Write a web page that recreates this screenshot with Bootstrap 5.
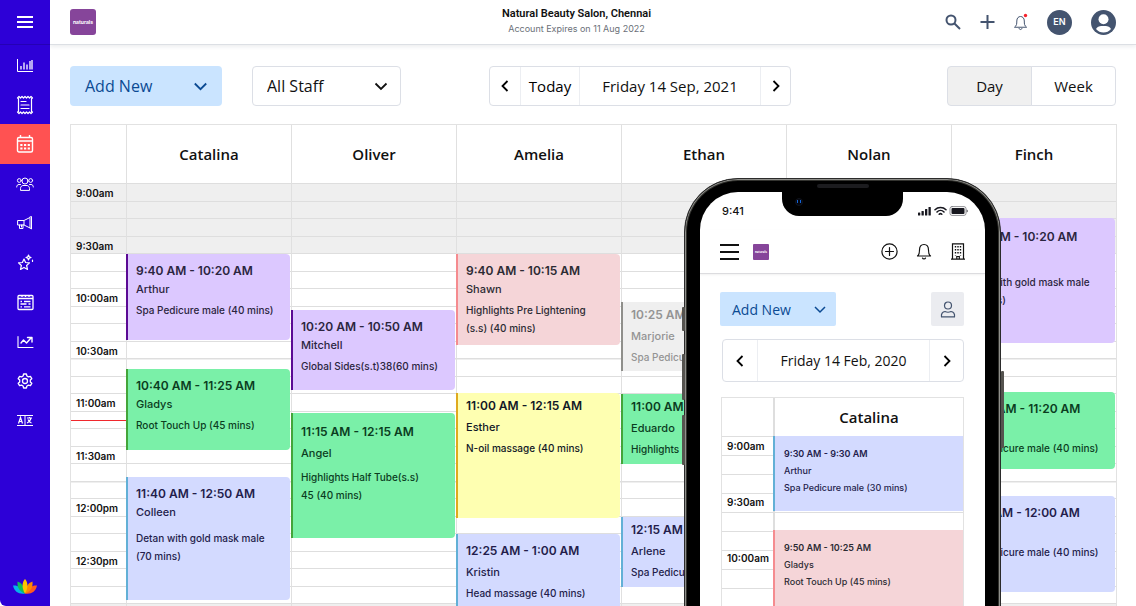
<!DOCTYPE html>
<html lang="en">
<head>
<meta charset="utf-8">
<meta name="viewport" content="width=device-width, initial-scale=1">
<title>Appointments</title>
<link href="https://cdn.jsdelivr.net/npm/bootstrap@5.3.0/dist/css/bootstrap.min.css" rel="stylesheet">
<style>
  body { font-family: Inter, "Liberation Sans", sans-serif; color: #111; background: #fff; overflow: hidden; }
  button, select { font: inherit; }
  svg { display: block; flex: none; fill: none; stroke: currentColor; stroke-linecap: round; stroke-linejoin: round; }
  svg.flat { stroke-linecap: butt; stroke-linejoin: miter; }
  svg.solid { stroke: none; }
  .humanist { font-family: "Open Sans", "Noto Sans", sans-serif; }

  /* side navigation */
  .rail { flex: 0 0 50px; background: #2d00d7; border-bottom-left-radius: 6px; }
  .rail a, .rail button { color: #fff; display: flex; align-items: center; justify-content: center; height: 39px; }
  .rail li:nth-child(odd) a { height: 40px; }
  .rail .menu-btn { height: 45px; border: 0; border-bottom: 1px solid #2500b4; background: none; }
  .rail a.active { background: #ff5252; }
  .rail .home { height: 39px; }

  /* top bar */
  .topbar { height: 45px; padding: 0 20px; border-bottom: 1px solid #dcdfe4; box-shadow: 0 2px 4px rgba(30, 40, 60, .08); }
  .brand { background: #86459a; color: #fff; border-radius: 3px; display: grid; place-items: center; width: 26px; height: 26px; font-size: 5px; line-height: 6px; font-weight: 700; text-decoration: none; overflow: hidden; }
  .salon { padding-left: 112px; }
  .salon h1 { font: 600 11px/14px Roboto, sans-serif; }
  .salon p { font-size: 9px; line-height: 16px; color: #6b7078; }
  .tools { color: #44546f; gap: 19px; }
  .tools button, .app-tools button { border: 0; padding: 0; background: none; color: inherit; }
  .tools .lang { width: 25px; height: 25px; background: #44546f; color: #fff; font-size: 9px; font-weight: 600; }

  /* toolbar */
  .workspace { padding: 21px 20px 0; }
  .toolbar { height: 40px; font-size: 16px; }
  .toolbar > * { height: 40px; }
  .add-new { background: #cae4ff; color: #0b4a93; border: 0; border-radius: 4px; padding: 0 15px; }
  .toolbar .add-new { width: 152px; }
  .staff { width: 149px; padding: 0 14px; border-color: #dcdfe6; border-radius: 4px; color: #111; margin-left: 30px;
    background-image: url("data:image/svg+xml,%3csvg xmlns='http://www.w3.org/2000/svg' viewBox='0 0 14 14'%3e%3cpath fill='none' stroke='%23111' stroke-width='1.8' d='M1.5 4.5 7 10l5.5-5.5'/%3e%3c/svg%3e");
    background-size: 14px 14px; background-position: right 12px center; }
  .stepper { border: 1px solid #dcdfe6; border-radius: 4px; color: #111; }
  .stepper > * { border: 0; background: none; padding: 0; display: flex; align-items: center; justify-content: center; }
  .stepper > * + * { border-left: 1px solid #eceef2; }
  .toolbar .stepper { margin-left: 88px; font-size: 15px; }
  .arrow { width: 30px; }
  .today { width: 59px; }
  .date { width: 181px; }
  .range button { width: 85px; padding: 0; border: 1px solid #dcdfe6; border-radius: 4px; font-size: 15px; color: #111; background: #fff; }
  .range button.active { background: #f0f0f0; border-color: #dcdfe6; color: #111; }

  /* calendar */
  .planner { margin: 18px -1px 0 0; border: 1px solid #e2e2e2; border-bottom: 0; }
  .planner .head { height: 58px; font-size: 15px; font-weight: 600; }
  .hours { flex: 0 0 55px; }
  .day { flex: 1 1 0; min-width: 0; border-left: 1px solid #e0e0e0; }
  .slots {
    min-height: 424px;
    background:
      linear-gradient(#dedede 1px, transparent 1px, transparent 18px, #dedede 18px, #dedede 19px, transparent 19px) 0 0 / 100% 35px,
      linear-gradient(#efefef, #efefef) 0 0 / 100% 71px no-repeat,
      linear-gradient(#efefef 2px, transparent 2px) 0 52px / 100% 123px; }
  .slots time { display: block; height: 52px; padding-left: 5px; font-size: 10px; line-height: 20px; font-weight: 600; white-space: nowrap; }
  .slots time:nth-of-type(odd) { height: 53px; }
  .now { position: absolute; left: 0; right: 0; top: var(--at); height: 1px; background: #f0282d; }

  .appt { margin-top: var(--gap); height: var(--len); margin-left: -1px; margin-right: 1px; padding: 8px 8px 0; border-left: 2px solid; border-radius: 0 4px 4px 0; font-size: 10px; line-height: 18px; font-weight: 500; overflow: hidden; }
  .appt h3 { font-size: 12px; line-height: 18px; font-weight: 600; margin: 0; white-space: nowrap; }
  .appt .who { font-size: 11px; line-height: 18px; min-height: 18px; margin: 0; }
  .appt .what { margin: 3px 0 0; }
  .appt.tall .what { margin-top: 8px; }
  .appt.open .who { line-height: 24px; }
  .appt.open .what { margin-top: 0; }
  .appt.roomy { padding-top: 10px; }
  .appt.roomy .what { margin-top: 3px; }
  .violet { background: #dcc8ff; color: #2b2540; border-left-color: #5b0a94; }
  .green { background: #7af0a8; color: #0b3d1f; border-left-color: #43a53a; }
  .blue { background: #d3daff; color: #231d4b; border-left-color: #62b0d6; }
  .rose { background: #f5d5d8; color: #2c2b33; border-left-color: #f58b8f; }
  .yellow { background: #feffb1; color: #111827; border-left-color: #dfaa1e; }
  .grey { background: #efefef; color: #949494; border-left-color: #8f8f8b; }

  /* phone preview lying over the calendar */
  .phone { position: absolute; top: 178px; right: 135px; width: 317px; height: 520px; padding: 13px 15px 0; background: #000; border: 1px solid #2b2b2b; border-radius: 54px 54px 0 0; box-shadow: inset 0 0 0 1px #8f8f8b, inset 0 0 0 2px #33332f; }
  .screen { background: #fff; border-radius: 38px 38px 0 0; height: 100%; overflow: hidden; }
  .notch { position: absolute; top: 2px; left: 97px; right: 97px; height: 35px; background: #000; border-radius: 0 0 17px 17px; }
  .speaker { position: absolute; top: 3px; left: 50%; width: 52px; height: 4px; margin-left: -26px; border-radius: 2px; background: #1c1c1f; }
  .lens { position: absolute; top: 17px; left: 13px; width: 8px; height: 8px; border-radius: 50%; background: #04060e; border: 1px solid #10131c; }
  .lens::after { content: ""; display: block; margin: 1px; height: 3px; border: solid #1264d8; border-width: 0 1px; }
  .key { position: absolute; width: 3px; background: #55534f; border-radius: 1px; }
  .key.mute { left: -3px; top: 128px; height: 24px; }
  .key.up { left: -3px; top: 175px; height: 46px; }
  .key.down { left: -3px; top: 236px; height: 50px; }
  .key.power { right: -4px; top: 192px; height: 77px; }
  .status { height: 38px; padding: 0 17px 0 22px; font-size: 11px; font-weight: 500; color: #111; }
  .app-bar { height: 44px; padding: 0 19px 0 20px; border-bottom: 1px solid #dcdcdf; box-shadow: 0 1px 2px rgba(0, 0, 0, .06); }
  .app-bar .brand { width: 16px; height: 16px; font-size: 3px; border-radius: 1px; }
  .app-tools { gap: 18px; }
  .app-tools .brand { margin-left: -4px; }
  .app-body { padding: 18px 21px 0 20px; }
  .app-body .add-new { width: 116px; height: 34px; padding: 0 10px 0 12px; font-size: 14px; border-radius: 2px; }
  .client { width: 33px; height: 34px; border: 0; padding: 0; border-radius: 2px; background: #ebecf0; color: #44546f; }
  .app-body .stepper { margin: 13px 0 0 2px; height: 43px; font-size: 14px; }
  .app-body .arrow { width: 34px; }
  .app-body .planner { margin: 15px 0 0 1px; }
  .app-body .head { height: 38px; }
  .app-body .hours { flex-basis: 51px; }
  .app-body .day { border-left: 2px solid #dedede; }
  .app-body .slots { min-height: 300px; background: linear-gradient(#dedede 1px, transparent 1px) 0 0 / 100% 19px; }
  .app-body .day.slots { background: none; }
  .app-body .slots time { height: 56px; }
  .app-body .appt { margin-left: -2px; margin-right: 0; padding: 9px 9px 0; font-size: 9px; border-radius: 0; line-height: 18px; }
  .app-body .appt h3 { font-size: 9px; }
  .app-body .appt .who { font-size: 9px; line-height: 16px; min-height: 16px; }
  .app-body .appt .what { margin: 0; }
</style>
</head>
<body>
<div class="d-flex vh-100 overflow-hidden position-relative">

  <nav class="rail d-flex flex-column" aria-label="Main">
    <button class="menu-btn" type="button" aria-label="Menu">
      <svg class="flat" width="16" height="14" viewBox="0 0 16 14" stroke-width="2"><path d="M0 2h16M0 7h16M0 12h16"/></svg>
    </button>
    <ul class="list-unstyled m-0">
      <li><a href="#" aria-label="Reports"><svg class="flat" width="18" height="16" viewBox="0 0 18 16"><path d="M1.500 2v12.500H17"/><path stroke-width="1.300" d="M5 12.500V9M8 12.500V5.500M11 12.500V7.500M14 12.500V4M16 12.500V3"/></svg></a></li>
      <li><a href="#" aria-label="Bills"><svg width="18" height="20" viewBox="0 0 18 20" stroke-width="1.200"><path d="M2.500 3.500v13M15.500 3.500v13M1.500 3l1.500-1.500L4.500 3 6 1.500 7.500 3 9 1.500 10.500 3 12 1.500 13.500 3 15 1.500 16.500 3M1.500 17 3 18.500 4.500 17 6 18.500 7.500 17 9 18.500 10.500 17 12 18.500 13.500 17 15 18.500 16.500 17M5 6.500h5M5 10h8M5 13.500h8"/></svg></a></li>
      <li><a href="#" class="active" aria-label="Calendar" aria-current="page"><svg class="flat" width="18" height="20" viewBox="0 0 18 20" stroke-width="1.400"><rect x="1.500" y="3.500" width="15" height="14.500" rx="1.500"/><path d="M4.500 1v3M13.500 1v3M2 7h14"/><path stroke-width="2" d="M4.300 11h2.200M8 11h2.200M11.700 11h2.200M4.300 14.500h2.200M8 14.500h2.200M11.700 14.500h2.200"/></svg></a></li>
      <li><a href="#" aria-label="Clients"><svg width="18" height="14" viewBox="0 0 18 14"><circle cx="9" cy="4" r="3"/><circle cx="3.300" cy="3.500" r="1.900"/><circle cx="14.700" cy="3.500" r="1.900"/><path d="M4.500 13V11.500C4.500 9.500 6 8.500 7 8.500h4c1 0 2.500 1 2.500 3V13zM4.500 7.500H3C1.500 7.500.7 8.500.7 10M13.500 7.500H15c1.500 0 2.300 1 2.300 2.500"/></svg></a></li>
      <li><a href="#" aria-label="Marketing"><svg width="16" height="14" viewBox="0 0 16 14"><path d="M1 4.500h6v4.500H1zM7 4.500 13 1.500v10.500L7 9M13 1l1.500-.5v12.500L13 12M2.500 9v3.500H6V9M4.500 9v2"/></svg></a></li>
      <li><a href="#" aria-label="Favourites"><svg width="17" height="17" viewBox="0 0 17 17" stroke-width="1.200"><path d="m7 5 1.600 3.500 3.900.4-2.900 2.600.9 3.900L7 13.400l-3.500 2 .9-3.900L1.500 8.900l3.900-.4zM11.500 1l.7 1.800 1.800.7-1.800.7-.7 1.800-.7-1.800L9 3.500l1.800-.7zM15.500 6v1.500"/></svg></a></li>
      <li><a href="#" aria-label="Forms"><svg class="flat" width="17" height="17" viewBox="0 0 17 17" stroke-width="1.300"><rect x="1" y="1.500" width="15" height="14" rx="1"/><path d="M1 4.500h15M5 1v2M8.500 1v2M12 1v2M3.500 7.500h1.500M7 7.500h6.500M3.500 10h6M11.500 10h2M3.500 12.800h1.500M7 12.800h6.500"/></svg></a></li>
      <li><a href="#" aria-label="Trends"><svg width="17" height="14" viewBox="0 0 17 14" stroke-width="1.100"><path d="M1 1.500v11h15"/><path stroke-width="1.400" d="m4 8 2.500-3 3 3L14 3M10.500 2.500H15V7"/></svg></a></li>
      <li><a href="#" aria-label="Settings"><svg width="16" height="16" viewBox="0 0 16 16" stroke-width="1.300"><circle cx="8" cy="8" r="2.500"/><path d="M6.600 1h2.800l.5 2 1.500.9 2-.6 1.400 2.400L13.300 7.100v1.800l1.500 1.400-1.400 2.400-2-.6-1.500.9-.5 2H6.600l-.5-2-1.500-.9-2 .6-1.400-2.400 1.500-1.400V7.100L1.200 5.700l1.400-2.400 2 .6L6.100 3z"/></svg></a></li>
      <li><a href="#" aria-label="Language"><svg class="flat" width="16" height="11" viewBox="0 0 16 11"><path d="M0 .5h16M0 10.500h16M8 .5v10"/><path stroke-width="1.200" d="m1.500 8.500 2-6 2 6M2.200 6.500h2.600M10 3h5M12.500 2v1M14 3c-.5 2.500-2 4-4 5M11 4.500c.5 1.500 2 3 3.500 3.500"/></svg></a></li>
    </ul>
    <a href="#" class="home mt-auto" aria-label="Home">
      <svg class="solid" width="24" height="15" viewBox="0 0 24 15"><path fill="#06b3ea" d="M0 6.500c4-.5 8 1 12 8C6 15.500 1.500 13 0 6.500z"/><path fill="#ff5a1f" d="M24 6.500c-4-.5-8 1-12 8 6 1 10.500-1.500 12-8z"/><path fill="#13bd5a" d="M4.500 2.500C9 4 11.500 8 12 14.500 6 12.500 4 8 4.500 2.500z"/><path fill="#ff8b00" d="M19.500 2.500C15 4 12.500 8 12 14.500c6-2 8-6.500 7.500-12z"/><path fill="#ffc400" d="M12 0c3 3 3.500 9 0 14.500C8.500 9 9 3 12 0z"/></svg>
    </a>
  </nav>

  <div class="flex-grow-1 overflow-hidden">
    <header class="topbar d-flex align-items-center bg-white">
      <a class="brand" href="#">naturals</a>
      <div class="salon flex-grow-1 text-center">
        <h1 class="m-0">Natural Beauty Salon, Chennai</h1>
        <p class="m-0">Account Expires on 11 Aug 2022</p>
      </div>
      <div class="tools d-flex align-items-center">
        <button type="button" aria-label="Search"><svg class="flat" width="16" height="16" viewBox="0 0 16 16" stroke-width="2"><circle cx="6" cy="6" r="4.500"/><path d="m9.200 9.200 5.800 5.800"/></svg></button>
        <button type="button" aria-label="Add"><svg class="flat" width="15" height="16" viewBox="0 0 15 16" stroke-width="2"><path d="M7.500 1v14M.5 8h14"/></svg></button>
        <button type="button" aria-label="Notifications"><svg width="14" height="18" viewBox="0 0 14 18"><path d="M.8 14c2-1.500 2-3 2-6C2.800 5 4.500 3.500 6.500 3.500S10.300 5 10.300 8c0 3 0 4.500 2 6zM5 15.500c.5 1.500 2.500 1.500 3 0"/><circle cx="11.500" cy="2.500" r="1.700" fill="#f5222d" stroke="none"/></svg></button>
        <button class="lang rounded-circle" type="button">EN</button>
        <button type="button" aria-label="Account"><svg class="solid" width="25" height="25" viewBox="0 0 25 25"><circle cx="12.500" cy="12.500" r="12.500" fill="#44546f"/><circle cx="12.500" cy="9.300" r="5" fill="#fff"/><path fill="#fff" d="M5 19c1-2.500 4-3 7.500-3s6.500.5 7.500 3c-2 2.500-4.500 3.500-7.500 3.500S7 21.500 5 19z"/></svg></button>
      </div>
    </header>

    <main class="workspace">
      <div class="toolbar d-flex">
        <button class="add-new humanist d-flex align-items-center justify-content-between" type="button">Add New
          <svg class="flat" width="13" height="13" viewBox="0 0 13 13" stroke-width="1.800"><path d="m.8 3.500 5.700 5.700 5.700-5.700"/></svg>
        </button>
        <select class="form-select staff humanist" aria-label="Staff"><option>All Staff</option></select>
        <div class="stepper humanist d-flex">
          <button class="arrow" type="button" aria-label="Previous day"><svg class="flat" width="8" height="12" viewBox="0 0 8 12" stroke-width="1.800"><path d="M6.500 1 1.500 6l5 5"/></svg></button>
          <button class="today" type="button">Today</button>
          <span class="date">Friday 14 Sep, 2021</span>
          <button class="arrow" type="button" aria-label="Next day"><svg class="flat" width="8" height="12" viewBox="0 0 8 12" stroke-width="1.800"><path d="m1.500 1 5 5-5 5"/></svg></button>
        </div>
        <div class="range humanist btn-group ms-auto" role="group" aria-label="Range">
          <button class="btn active" type="button">Day</button>
          <button class="btn" type="button">Week</button>
        </div>
      </div>

      <section class="planner" aria-label="Day planner">
        <div class="head humanist d-flex text-center">
          <div class="hours"></div>
          <div class="day d-grid align-items-center">Catalina</div>
          <div class="day d-grid align-items-center">Oliver</div>
          <div class="day d-grid align-items-center">Amelia</div>
          <div class="day d-grid align-items-center">Ethan</div>
          <div class="day d-grid align-items-center">Nolan</div>
          <div class="day d-grid align-items-center">Finch</div>
        </div>
        <div class="slots d-flex">
          <div class="hours position-relative">
            <time>9:00am</time><time>9:30am</time><time>10:00am</time><time>10:30am</time>
            <time>11:00am</time><time>11:30am</time><time>12:00pm</time><time>12:30pm</time>
            <div class="now" style="--at:237px"></div>
          </div>
          <div class="day">
            <article class="appt violet" style="--gap:71px;--len:86px"><h3>9:40 AM - 10:20 AM</h3><p class="who">Arthur</p><p class="what">Spa Pedicure male (40 mins)</p></article>
            <article class="appt green" style="--gap:29px;--len:81px"><h3>10:40 AM - 11:25 AM</h3><p class="who">Gladys</p><p class="what">Root Touch Up (45 mins)</p></article>
            <article class="appt blue tall" style="--gap:27px;--len:123px"><h3>11:40 AM - 12:50 AM</h3><p class="who">Colleen</p><p class="what">Detan with gold mask male<br>(70 mins)</p></article>
          </div>
          <div class="day">
            <article class="appt violet" style="--gap:127px;--len:80px"><h3>10:20 AM - 10:50 AM</h3><p class="who">Mitchell</p><p class="what">Global Sides(s.t)38(60 mins)</p></article>
            <article class="appt green open roomy" style="--gap:23px;--len:125px"><h3>11:15 AM - 12:15 AM</h3><p class="who">Angel</p><p class="what">Highlights Half Tube(s.s)<br>45 (40 mins)</p></article>
          </div>
          <div class="day">
            <article class="appt rose" style="--gap:71px;--len:91px"><h3>9:40 AM - 10:15 AM</h3><p class="who">Shawn</p><p class="what">Highlights Pre Lightening<br>(s.s) (40 mins)</p></article>
            <article class="appt yellow open pt-1" style="--gap:48px;--len:125px"><h3>11:00 AM - 12:15 AM</h3><p class="who">Esther</p><p class="what">N-oil massage (40 mins)</p></article>
            <article class="appt blue open pt-2" style="--gap:16px;--len:90px"><h3>12:25 AM - 1:00 AM</h3><p class="who">Kristin</p><p class="what">Head massage (40 mins)</p></article>
          </div>
          <div class="day">
            <article class="appt grey open pt-1" style="--gap:119px;--len:69px"><h3>10:25 AM</h3><p class="who">Marjorie</p><p class="what">Spa Pedicure</p></article>
            <article class="appt green open pt-1" style="--gap:23px;--len:70px"><h3>11:00 AM</h3><p class="who">Eduardo</p><p class="what">Highlights</p></article>
            <article class="appt blue open pt-1" style="--gap:53px;--len:70px"><h3>12:15 AM</h3><p class="who">Arlene</p><p class="what">Spa Pedicure</p></article>
          </div>
          <div class="day"></div>
          <div class="day">
            <article class="appt violet open roomy" style="--gap:35px;--len:125px"><h3>9:20 AM - 10:20 AM</h3><p class="who">&nbsp;</p><p class="what">Detan with gold mask male<br>(70 mins)</p></article>
            <article class="appt green" style="--gap:49px;--len:77px"><h3>10:40 AM - 11:20 AM</h3><p class="who">&nbsp;</p><p class="what">Spa Pedicure male (40 mins)</p></article>
            <article class="appt blue" style="--gap:27px;--len:96px"><h3>11:20 AM - 12:00 AM</h3><p class="who">&nbsp;</p><p class="what">Spa Pedicure male (40 mins)</p></article>
          </div>
        </div>
      </section>
    </main>
  </div>

  <aside class="phone" aria-label="Phone preview">
    <i class="key mute"></i><i class="key up"></i><i class="key down"></i><i class="key power"></i>
    <div class="screen">
      <div class="status d-flex align-items-center justify-content-between">
        <span>9:41</span>
        <svg class="solid" width="50" height="10" viewBox="0 0 50 10"><g fill="#17171f"><rect y="6.500" width="2.300" height="3" rx=".6"/><rect x="3.500" y="5" width="2.300" height="4.500" rx=".6"/><rect x="7" y="3" width="2.300" height="6.500" rx=".6"/><rect x="10.500" y="1" width="2.300" height="8.500" rx=".6"/><rect x="33.500" y="2" width="13" height="6" rx="1"/><path d="M48.700 3.500v3c1.200-.5 1.200-2.500 0-3z"/></g><path fill="none" stroke="#17171f" stroke-width="1.600" d="M17 3.700c3-3 8-3 11 0M19 6c2-2 5-2 7 0M21.200 8.200c.8-.8 1.800-.8 2.600 0"/><rect x="32" y=".6" width="16" height="8.800" rx="2" fill="none" stroke="#77777d" stroke-width=".8"/></svg>
      </div>
      <div class="app-bar d-flex align-items-center">
        <div class="app-tools d-flex align-items-center flex-grow-1">
          <button type="button" aria-label="Menu"><svg class="flat" width="19" height="16" viewBox="0 0 19 16" stroke-width="2"><path d="M0 1h19M0 8h19M0 15h19"/></svg></button>
          <a class="brand me-auto" href="#">naturals</a>
          <button type="button" aria-label="Add"><svg width="17" height="17" viewBox="0 0 17 17" stroke-width="1.200"><circle cx="8.500" cy="8.500" r="7.600"/><path d="M8.500 4.500v8M4.500 8.500h8"/></svg></button>
          <button type="button" aria-label="Notifications"><svg width="16" height="17" viewBox="0 0 16 17" stroke-width="1.200"><path d="M1.500 13c2-1.500 2-3.500 2-6C3.500 3.500 5.500 1.500 8 1.500S12.500 3.500 12.500 7c0 2.500 0 4.500 2 6zM6.500 15c.5 1.300 2.500 1.300 3 0"/></svg></button>
          <button type="button" aria-label="Branch"><svg class="flat" width="16" height="17" viewBox="0 0 16 17" stroke-width="1.200"><path d="M1 16.200h14M2.500 16V.8h11V16M6.800 16v-2.500h2.500V16"/><path stroke-width="1.400" stroke-dasharray="1.500 1.500" d="M5.500 3v9.500M8 3v8M10.500 3v9.500"/></svg></button>
        </div>
      </div>
      <div class="app-body">
        <div class="d-flex justify-content-between">
          <button class="add-new humanist d-flex align-items-center justify-content-between" type="button">Add New
            <svg class="flat" width="12" height="12" viewBox="0 0 12 12" stroke-width="1.500"><path d="m1 4 5 5 5-5"/></svg>
          </button>
          <button class="client d-grid align-items-center justify-content-center" type="button" aria-label="Client"><svg width="16" height="17" viewBox="0 0 16 17" stroke-width="1.200"><circle cx="8" cy="4.500" r="3.500"/><path d="M1.500 15.800c-.5-3 1-5 3.500-5.300 2 1 4 1 6 0 2.500.3 4 2.300 3.500 5.300z"/></svg></button>
        </div>
        <div class="stepper humanist d-flex">
          <button class="arrow" type="button" aria-label="Previous day"><svg class="flat" width="8" height="12" viewBox="0 0 8 12" stroke-width="1.800"><path d="M6.500 1 1.500 6l5 5"/></svg></button>
          <span class="flex-grow-1">Friday 14 Feb, 2020</span>
          <button class="arrow" type="button" aria-label="Next day"><svg class="flat" width="8" height="12" viewBox="0 0 8 12" stroke-width="1.800"><path d="m1.500 1 5 5-5 5"/></svg></button>
        </div>
        <section class="planner" aria-label="Phone day planner">
          <div class="head humanist d-flex text-center">
            <div class="hours"></div>
            <div class="day d-grid align-items-center">Catalina</div>
          </div>
          <div class="slots d-flex">
            <div class="hours"><time>9:00am</time><time>9:30am</time><time>10:00am</time></div>
            <div class="day">
              <article class="appt blue" style="--gap:0px;--len:75px"><h3>9:30 AM - 9:30 AM</h3><p class="who">Arthur</p><p class="what">Spa Pedicure male (30 mins)</p></article>
              <article class="appt rose" style="--gap:19px;--len:114px"><h3>9:50 AM - 10:25 AM</h3><p class="who">Gladys</p><p class="what">Root Touch Up (45 mins)</p></article>
            </div>
          </div>
        </section>
      </div>
    </div>
    <div class="notch"><i class="speaker"></i><i class="lens"></i></div>
  </aside>
</div>
<script src="https://cdn.jsdelivr.net/npm/bootstrap@5.3.0/dist/js/bootstrap.bundle.min.js"></script>
</body>
</html>
